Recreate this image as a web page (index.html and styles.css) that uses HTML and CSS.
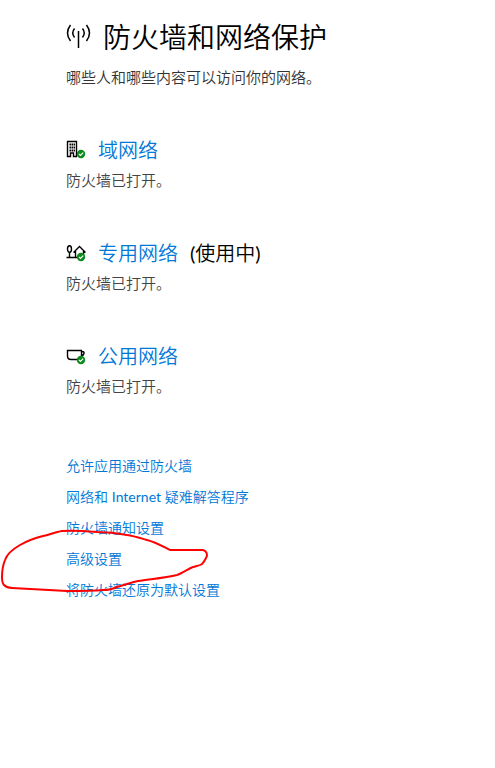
FILE: index.html
```html
<!doctype html>
<html lang="zh-CN">
  <head>
    <meta charset="UTF-8" />
    <meta name="viewport" content="width=device-width, initial-scale=1.0" />
    <title>防火墙和网络保护</title>
    <link rel="stylesheet" href="styles.css">
  </head>
  <body>
    <main class="page">
      <header>
        <h1 class="page-title">
          <svg class="title-icon" viewBox="0 0 25 26" aria-hidden="true">
            <path d="M4.500 1Q-1.500 9 4.500 17M8.500 4.500Q5 9 8.500 13.500M16.500 4.500Q20 9 16.500 13.500M20.500 1Q26.500 9 20.500 17" />
            <path d="M12.500 7V24" />
          </svg>
          防火墙和网络保护
        </h1>
        <p class="subtitle">哪些人和哪些内容可以访问你的网络。</p>
      </header>

      <section class="network">
        <h2 class="network-title">
          <svg class="network-icon" viewBox="0 0 20 20" aria-hidden="true">
            <path d="M1.500 16.500V1.500H10.500V16.500H7.500V13H4.500V16.500Z" />
            <path class="windows" d="M3.500 4.500H9M3.500 7.500H9M3.500 10.500H9" />
            <circle class="badge" cx="15" cy="14" r="4.200" />
            <path class="check" d="M13 14l1.500 1.500L17.200 12.700" />
          </svg>
          <a href="#domain">域网络</a>
        </h2>
        <p class="status">防火墙已打开。</p>
      </section>

      <section class="network">
        <h2 class="network-title">
          <svg class="network-icon" viewBox="0 0 20 20" aria-hidden="true">
            <ellipse cx="3.500" cy="6" rx="2" ry="3.200" />
            <path d="M3.500 9V14.500M0.500 14.500H11M7.500 9.500L13.500 3.500L19.500 9.500M9.500 8V14.500M17.500 8V13" />
            <circle class="badge" cx="15" cy="14" r="4.200" />
            <path class="check" d="M13 14l1.500 1.500L17.200 12.700" />
          </svg>
          <a href="#private">专用网络</a>
          <span><span class="latin">(</span>使用中<span class="latin">)</span></span>
        </h2>
        <p class="status">防火墙已打开。</p>
      </section>

      <section class="network">
        <h2 class="network-title">
          <svg class="network-icon" viewBox="0 0 20 20" aria-hidden="true">
            <path d="M1.500 4.500H15.500V10Q15.500 13.500 12 13.500H5Q1.500 13.500 1.500 10ZM15.500 5.500Q18.500 5.200 18 7.500Q17.600 9.500 15.500 9.500" />
            <circle class="badge" cx="15" cy="14" r="4.200" />
            <path class="check" d="M13 14l1.500 1.500L17.200 12.700" />
          </svg>
          <a href="#public">公用网络</a>
        </h2>
        <p class="status">防火墙已打开。</p>
      </section>

      <ul class="links">
        <li><a href="#allow">允许应用通过防火墙</a></li>
        <li><a href="#troubleshoot">网络和 <span class="latin">Internet</span> 疑难解答程序</a></li>
        <li><a href="#notify">防火墙通知设置</a></li>
        <li class="marked">
          <a href="#advanced">高级设置</a>
          <svg class="marker" viewBox="0 0 214 72" aria-hidden="true">
            <path d="M170 26C162 22 155 18 147 16C140 14 134 12 127 11C117 9 107 8 97 8C85 7 72 6 62 7C55 8 49 11 43 12C35 14 27 17 20 21C13 25 7 30 5 36C3 41 2 47 2 53C2 57 2 59 4 61C6 63 8 64 12 64L67 67C80 67 92 67 103 66C108 66 113 65 117 63C125 61 132 58 138 57C151 55 165 54 177 51C183 49 188 45 193 43C196 42 199 42 202 40C204 38 205 36 206 34C208 31 207 27 203 26L170 26" />
          </svg>
        </li>
        <li><a href="#restore">将防火墙还原为默认设置</a></li>
      </ul>
    </main>
  </body>
</html>
```
FILE: styles.css
```css
* {
  margin: 0;
  padding: 0;
  box-sizing: border-box;
}

body {
  font-family: Lato, "Noto Sans CJK SC", sans-serif;
  font-weight: 350;
  background: #fff;
  color: #000;
}

a {
  color: #0078d7;
  text-decoration: none;
}

a:hover {
  color: #666;
}

svg {
  flex: none;
  fill: none;
  stroke: #000;
}

.page {
  padding: 17px 16px 40px 66px;
}

.latin {
  font-weight: 400;
}

.page-title {
  display: flex;
  align-items: center;
  gap: 12px;
  font-size: 28px;
  font-weight: 350;
  line-height: 40px;
}

.title-icon {
  width: 25px;
  height: 26px;
  stroke-width: 1.5;
}

.subtitle {
  margin-top: 10px;
  font-size: 15px;
  line-height: 20px;
  color: #333;
}

.network {
  margin-top: 49px;
}

.network-title {
  display: flex;
  align-items: center;
  gap: 12px;
  font-size: 20px;
  font-weight: 350;
  line-height: 28px;
}

.network-icon {
  width: 20px;
  height: 20px;
  stroke-width: 1.4;
}

.windows {
  stroke-width: 2;
  stroke-dasharray: 1.5 0.5;
}

.badge {
  fill: #0a8a1c;
  stroke: none;
}

.check {
  stroke: #fff;
  stroke-width: 1.2;
}

.status {
  margin-top: 6px;
  font-size: 15px;
  line-height: 20px;
  color: #444;
}

.links {
  display: flex;
  flex-direction: column;
  gap: 11px;
  margin-top: 60px;
  list-style: none;
  font-size: 14px;
  line-height: 20px;
}

.marked {
  position: relative;
}

/* hand-drawn ring around the advanced settings link */
.marker {
  position: absolute;
  top: -25px;
  left: -66px;
  width: 214px;
  height: 72px;
  stroke: #f00;
  stroke-width: 2;
  stroke-linejoin: round;
  pointer-events: none;
}
```
